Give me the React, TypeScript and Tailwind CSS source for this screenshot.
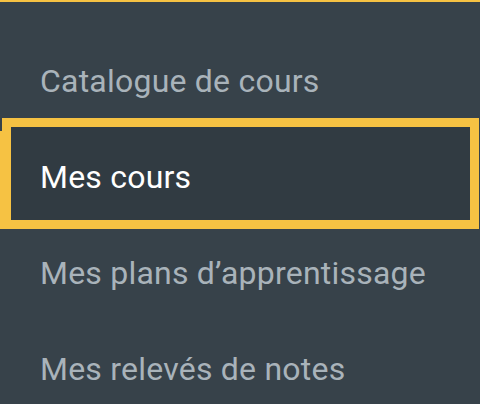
export default function App() {
  const font = { fontFamily: "Roboto, 'Liberation Sans', sans-serif" };
  return (
    <div className="w-[480px] h-[404px] bg-[#37424a] overflow-hidden" style={font}>
      <div className="h-[2px] bg-[#f6c243]" />
      <div className="mt-[60px] pl-[40px] text-[32px] leading-[38px] tracking-[0.22px] text-[#a9b3ba]">Catalogue de cours</div>
      <div className="mt-[18px] flex mr-[1px]">
        <div className="w-[2px] h-[98px] self-end bg-[#f6c243]" />
        <div className="flex-1 border-[9px] border-[#f6c243] bg-[#313b42]">
          <div className="pt-[31px] pb-[24px] pl-[29px] text-[32px] leading-[38px] tracking-[0.22px] text-white">Mes cours</div>
        </div>
      </div>
      <div className="mt-[25px] pl-[40px] text-[32px] leading-[38px] tracking-[0.22px] text-[#a9b3ba]">Mes plans d’apprentissage</div>
      <div className="mt-[58px] pl-[40px] text-[32px] leading-[38px] tracking-[0.22px] text-[#a9b3ba]">Mes relevés de notes</div>
    </div>
  );
}
